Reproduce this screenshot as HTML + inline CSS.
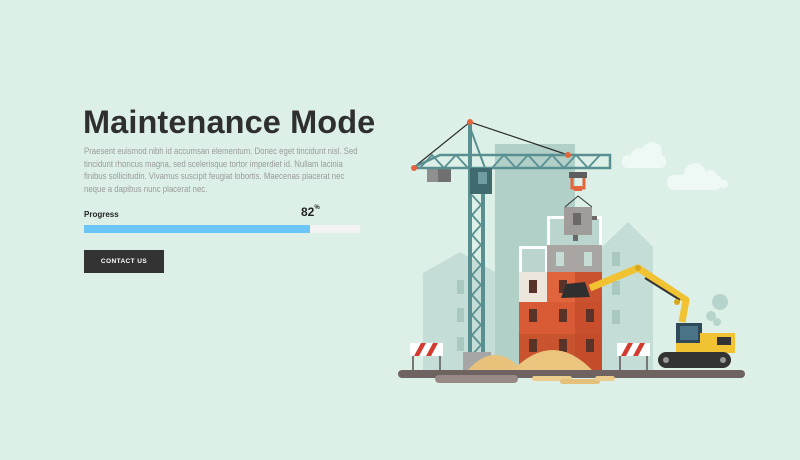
<!DOCTYPE html>
<html><head><style>
body{margin:0;width:800px;height:460px;background:#dcf0e8;font-family:"Liberation Sans",sans-serif;position:relative;overflow:hidden}
h1{position:absolute;left:83px;top:104px;margin:0;font-size:32.5px;font-weight:bold;color:#2f2f2f;letter-spacing:0.1px}
p{position:absolute;left:84px;top:145px;margin:0;font-size:8.8px;line-height:12.5px;color:#9a9a9a;white-space:nowrap;transform:scaleX(0.885);transform-origin:0 0}
.lab{position:absolute;left:84px;top:210px;font-size:8px;font-weight:bold;color:#222}
.pct{position:absolute;left:301px;top:205px;font-size:12px;font-weight:bold;color:#222}
.pct small{font-size:6px;vertical-align:top}
.bar{position:absolute;left:84px;top:225px;width:276px;height:8px;background:#f3f3f3}
.bar div{width:226px;height:8px;background:#6cc5f7}
.btn{position:absolute;left:84px;top:250px;width:80px;height:23px;background:#333;color:#fff;font-size:6.5px;font-weight:bold;text-align:center;line-height:23px;letter-spacing:.4px}
svg{position:absolute;left:0;top:0}
</style></head><body>
<h1>Maintenance Mode</h1>
<p>Praesent euismod nibh id accumsan elementum. Donec eget tincidunt nisl. Sed<br>tincidunt rhoncus magna, sed scelerisque tortor imperdiet id. Nullam lacinia<br>finibus sollicitudin. Vivamus suscipit feugiat lobortis. Maecenas placerat nec<br>neque a dapibus nunc placerat nec.</p>
<div class="lab">Progress</div>
<div class="pct">82<small>%</small></div>
<div class="bar"><div></div></div>
<div class="btn">CONTACT US</div>
<svg width="800" height="460">
<g fill="#eef8f4"><circle cx="640" cy="158" r="10"/><circle cx="652" cy="152" r="10"/><rect x="622" y="155" width="44" height="13" rx="6"/>
<circle cx="695" cy="174" r="11"/><circle cx="710" cy="178" r="8"/><rect x="667" y="175" width="55" height="15" rx="7"/><circle cx="724" cy="184" r="4"/></g>
<polygon points="423,273 460,252 497,273 497,370 423,370" fill="#c4ddd6"/>
<polygon points="602,247 628,222 653,247 653,370 602,370" fill="#c4ddd6"/>
<rect x="495" y="144" width="80" height="226" fill="#b1d0c8"/>
<g fill="#a8c8c0"><rect x="457" y="280" width="7" height="14"/><rect x="457" y="308" width="7" height="14"/><rect x="457" y="337" width="7" height="14"/><rect x="612" y="252" width="8" height="14"/><rect x="612" y="281" width="8" height="14"/><rect x="612" y="310" width="8" height="14"/></g>
<rect x="547" y="216" width="55" height="30" fill="#fff"/><rect x="550" y="219" width="49" height="27" fill="#b9d5cd"/>
<rect x="519" y="246" width="28" height="26" fill="#fff"/><rect x="522" y="249" width="23" height="23" fill="#b9d5cd"/>
<rect x="547" y="245" width="55" height="27" fill="#a9a5a3"/>
<rect x="519" y="272" width="28" height="30" fill="#ece6dc"/>
<rect x="547" y="272" width="55" height="30" fill="#e0643c"/>
<rect x="519" y="302" width="83" height="32" fill="#d95b36"/>
<rect x="519" y="334" width="83" height="36" fill="#c9522f"/>
<rect x="575" y="272" width="27" height="98" fill="#c24a28" opacity=".7"/>
<g fill="#5a3328"><rect x="529" y="280" width="8" height="13"/><rect x="559" y="280" width="8" height="13"/><rect x="529" y="309" width="8" height="13"/><rect x="559" y="309" width="8" height="13"/><rect x="586" y="309" width="8" height="13"/><rect x="529" y="339" width="8" height="13"/><rect x="559" y="339" width="8" height="13"/><rect x="586" y="339" width="8" height="13"/></g>
<g fill="#c6ddd6"><rect x="556" y="252" width="8" height="14"/><rect x="584" y="252" width="8" height="14"/></g>
<rect x="564" y="207" width="28" height="28" fill="#a09c9a"/><rect x="573" y="213" width="8" height="12" fill="#6c6866"/><rect x="592" y="216" width="5" height="4" fill="#6c6866"/><rect x="573" y="235" width="5" height="6" fill="#6c6866"/>
<path d="M565 207 L578 196 L592 207" stroke="#333" fill="none"/>
<rect x="569" y="172" width="18" height="6" fill="#5e5e5e"/><path d="M572 178 v10 h12 v-10" stroke="#e4653b" stroke-width="3" fill="none"/><rect x="574" y="186" width="8" height="5" fill="#e4653b"/>
<path d="M413 168 L470 122 L568 155" stroke="#2b2b2b" stroke-width="1.2" fill="none"/>
<rect x="427" y="169" width="24" height="13" fill="#8f8f8f"/><rect x="438" y="169" width="13" height="13" fill="#707070"/>
<path d="M412 168 L440 155 L610 155 L610 168 Z" stroke="#5a8f92" stroke-width="2.5" fill="none"/>
<path d="M420 168 L432 155 L444 168 L456 155 L468 168 M492 168 L504 155 L516 168 L528 155 L540 168 L552 155 L564 168 L576 155 L588 168 L600 155" stroke="#5a8f92" stroke-width="1.8" fill="none"/>
<rect x="468" y="122" width="4" height="240" fill="#5a8f92"/><rect x="481" y="168" width="4" height="194" fill="#5a8f92"/>
<path d="M468 122 L485 168" stroke="#5a8f92" stroke-width="2"/>
<path d="M472 195 L481 205 L472 215 L481 225 L472 235 L481 245 L472 255 L481 265 L472 275 L481 285 L472 295 L481 305 L472 315 L481 325 L472 335 L481 345 L472 355" stroke="#5a8f92" stroke-width="1.8" fill="none"/>
<rect x="470" y="168" width="22" height="26" fill="#3f6b6f"/><rect x="478" y="172" width="9" height="12" fill="#6f9da0"/>
<circle cx="470" cy="122" r="3" fill="#e4653b"/><circle cx="414" cy="168" r="3" fill="#e4653b"/><circle cx="568" cy="155" r="3" fill="#e4653b"/>
<rect x="463" y="352" width="28" height="18" fill="#a6a6a6"/>
<path d="M468 370 Q495 340 522 370 Z" fill="#e8c27a"/>
<path d="M513 370 Q553 330 592 370 Z" fill="#ebc57d"/>
<g><rect x="410" y="343" width="33" height="13" fill="#fff"/><path d="M414 356 l7 -13 h5 l-7 13z M426 356 l7 -13 h5 l-7 13z" fill="#d23b2f"/><path d="M413 356 v14 M440 356 v14" stroke="#777" stroke-width="2"/></g>
<g><rect x="617" y="343" width="33" height="13" fill="#fff"/><path d="M621 356 l7 -13 h5 l-7 13z M633 356 l7 -13 h5 l-7 13z" fill="#d23b2f"/><path d="M620 356 v14 M647 356 v14" stroke="#777" stroke-width="2"/></g>
<g fill="#b7d4cc"><circle cx="720" cy="302" r="8"/><circle cx="711" cy="316" r="5"/><circle cx="717" cy="322" r="4"/></g>
<path d="M682 322 L686 300 L638 268 L590 288" stroke="#f1c232" stroke-width="7" fill="none" stroke-linejoin="round"/>
<path d="M645 278 L680 300" stroke="#333" stroke-width="2"/>
<circle cx="638" cy="268" r="3" fill="#d8a820"/><circle cx="677" cy="302" r="3" fill="#d8a820"/>
<path d="M585 282 L566 284 L561 298 L590 297 Z" fill="#2f2f2f"/>
<rect x="676" y="323" width="26" height="22" fill="#2e4a5a"/><rect x="680" y="326" width="18" height="14" fill="#4b7386"/>
<rect x="700" y="333" width="35" height="20" fill="#f1c232"/><rect x="676" y="343" width="30" height="10" fill="#f1c232"/><rect x="717" y="337" width="14" height="8" fill="#333"/>
<rect x="658" y="352" width="73" height="16" rx="8" fill="#333"/>
<g fill="#999"><circle cx="666" cy="360" r="3"/><circle cx="723" cy="360" r="3"/></g>
<rect x="398" y="370" width="347" height="8" rx="4" fill="#6e6360"/>
<rect x="435" y="375" width="83" height="8" rx="4" fill="#978a86"/>
<rect x="532" y="376" width="40" height="5" rx="2.5" fill="#eccd8d"/><rect x="560" y="379" width="40" height="5" rx="2.5" fill="#e5c07a"/><rect x="595" y="376" width="20" height="5" rx="2.5" fill="#eccd8d"/>
</svg>
</body></html>
